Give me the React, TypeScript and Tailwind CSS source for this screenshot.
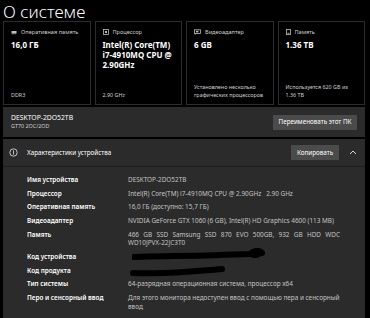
import React from "react";

const font = { fontFamily: '"Noto Sans", "Open Sans", sans-serif' };

function RamIcon() {
  return (
    <svg width="6" height="5" viewBox="0 0 6 5" className="shrink-0">
      <rect x="0.5" y="1" width="5" height="2.6" fill="#bdbdbd" />
      <rect x="1" y="3.6" width="0.6" height="0.8" fill="#bdbdbd" />
      <rect x="2.5" y="3.6" width="0.6" height="0.8" fill="#bdbdbd" />
      <rect x="4" y="3.6" width="0.6" height="0.8" fill="#bdbdbd" />
    </svg>
  );
}

function CpuIcon() {
  return (
    <svg width="6" height="6" viewBox="0 0 6 6" className="shrink-0">
      <rect x="0.5" y="0.5" width="5" height="5" fill="none" stroke="#bdbdbd" strokeWidth="0.8" />
      <rect x="2" y="2" width="2" height="2" fill="#bdbdbd" />
    </svg>
  );
}

function GpuIcon() {
  return (
    <svg width="7" height="6" viewBox="0 0 7 6" className="shrink-0">
      <rect x="0.5" y="0.8" width="6" height="3.6" fill="none" stroke="#bdbdbd" strokeWidth="0.8" />
      <rect x="2" y="1.8" width="2.4" height="1.6" fill="#bdbdbd" />
      <rect x="0.5" y="4.6" width="1.4" height="0.8" fill="#bdbdbd" />
    </svg>
  );
}

function DiskIcon() {
  return (
    <svg width="5" height="6" viewBox="0 0 5 6" className="shrink-0">
      <rect x="0.5" y="0.4" width="4" height="5.2" fill="none" stroke="#bdbdbd" strokeWidth="0.8" />
      <rect x="1.4" y="3.8" width="2.2" height="0.8" fill="#bdbdbd" />
    </svg>
  );
}

type CardProps = {
  icon: React.ReactNode;
  label: string;
  value: React.ReactNode;
  footer: React.ReactNode;
};

function SpecCard({ icon, label, value, footer }: CardProps) {
  return (
    <div className="h-[84px] border border-[#2c2c2c] bg-black px-[7px] pt-[6px] pb-[5px] flex flex-col justify-between">
      <div>
        <div className="flex items-center gap-[4px] text-[5.6px] leading-[8px] text-[#cfcfcf]">
          {icon}
          <span>{label}</span>
        </div>
        <div className="mt-[4px] text-[8px] leading-[10px] font-bold text-white">{value}</div>
      </div>
      <div className="text-[5.4px] leading-[7.5px] text-[#cfcfcf]">{footer}</div>
    </div>
  );
}

type Row = { label: string; value?: React.ReactNode; redact?: "a" | "b" };

const rows: Row[] = [
  { label: "Имя устройства", value: "DESKTOP-2DO52TB" },
  { label: "Процессор", value: "Intel(R) Core(TM) i7-4910MQ CPU @ 2.90GHz\u00a0\u00a0 2.90 GHz" },
  { label: "Оперативная память", value: "16,0 ГБ (доступно: 15,7 ГБ)" },
  { label: "Видеоадаптер", value: "NVIDIA GeForce GTX 1060 (6 GB), Intel(R) HD Graphics 4600 (113 MB)" },
  {
    label: "Память",
    value: (
      <span className="block text-justify [text-align-last:left]">
        466 GB SSD Samsung SSD 870 EVO 500GB, 932 GB HDD WDC WD10JPVX-22JC3T0
      </span>
    ),
  },
  { label: "Код устройства", redact: "a" },
  { label: "Код продукта", redact: "b" },
  { label: "Тип системы", value: "64-разрядная операционная система, процессор x64" },
  { label: "Перо и сенсорный ввод", value: "Для этого монитора недоступен ввод с помощью пера и сенсорный ввод" },
];

function Redaction({ kind }: { kind: "a" | "b" }) {
  if (kind === "a") {
    return (
      <svg width="140" height="16" viewBox="0 0 140 16" className="absolute left-[4px] top-[-5px]">
        <path d="M2 9 C 30 8, 70 8, 118 6 C 122 2, 128 2, 130 5" stroke="#000" strokeWidth="6" fill="none" strokeLinecap="round" />
        <ellipse cx="123" cy="6" rx="7" ry="4" fill="#000" />
      </svg>
    );
  }
  return (
    <svg width="110" height="16" viewBox="0 0 110 16" className="absolute left-[2px] top-[-3px]">
      <path d="M3 9 C 30 10, 60 8, 92 5" stroke="#000" strokeWidth="6" fill="none" strokeLinecap="round" />
    </svg>
  );
}

function InfoIcon() {
  return (
    <svg width="9" height="9" viewBox="0 0 9 9" className="shrink-0">
      <circle cx="4.5" cy="4.5" r="3.7" fill="none" stroke="#e6e6e6" strokeWidth="0.8" />
      <rect x="4.1" y="2.4" width="0.8" height="4.2" fill="#e6e6e6" />
    </svg>
  );
}

function ChevronUp() {
  return (
    <svg width="8" height="5" viewBox="0 0 8 5">
      <path d="M1 4 L4 1 L7 4" stroke="#e6e6e6" strokeWidth="0.9" fill="none" />
    </svg>
  );
}

export default function App() {
  return (
    <div className="w-[370px] h-[318px] overflow-hidden bg-black pl-[3px] pr-[5px] text-white" style={font}>
      <div className="pt-[2px] text-[17px] leading-[19px] font-light">О системе</div>

      <div className="grid grid-cols-4 gap-[4px]">
        <SpecCard icon={<RamIcon />} label="Оперативная память" value="16,0 ГБ" footer="DDR3" />
        <SpecCard
          icon={<CpuIcon />}
          label="Процессор"
          value={
            <>
              Intel(R) Core(TM)
              <br />
              i7-4910MQ CPU @
              <br />
              2.90GHz
            </>
          }
          footer="2.90 GHz"
        />
        <SpecCard
          icon={<GpuIcon />}
          label="Видеоадаптер"
          value="6 GB"
          footer="Установлено несколько графических процессоров"
        />
        <SpecCard icon={<DiskIcon />} label="Память" value="1.36 TB" footer="Используется 620 GB из 1.36 TB" />
      </div>

      <div className="mt-[2px] h-[30px] bg-[#2b2b2b] pl-[8px] pr-[8px] flex items-center justify-between">
        <div>
          <div className="text-[6.8px] leading-[8px] text-white">DESKTOP-2DO52TB</div>
          <div className="text-[5.4px] leading-[8px] text-[#cfcfcf]">GT70 2OC/2OD</div>
        </div>
        <div className="w-[84px] h-[15px] bg-[#4b4b4b] flex items-center justify-center text-[6.3px] text-white">
          Переименовать этот ПК
        </div>
      </div>

      <div className="mt-[2px] bg-[#2b2b2b] h-[200px]">
        <div className="h-[28px] flex items-center pl-[6px] pr-[8px] border-b border-[#1c1c1c]">
          <InfoIcon />
          <span className="ml-[9px] text-[6.3px] text-white">Характеристики устройства</span>
          <div className="ml-auto w-[48px] h-[15px] bg-[#4b4b4b] flex items-center justify-center text-[6.3px] text-white">
            Копировать
          </div>
          <div className="ml-[10px] w-[8px] flex items-center justify-center">
            <ChevronUp />
          </div>
        </div>

        <div className="pt-[9px] pl-[24px] flex flex-col gap-[5.2px]">
          {rows.map((r) => (
            <div key={r.label} className="flex text-[6.4px] leading-[8.5px]">
              <div className="w-[101px] shrink-0 font-semibold text-white">{r.label}</div>
              <div className="relative w-[212px] text-[#c4c4c4]">
                {r.redact ? (
                  <>
                    &nbsp;
                    <Redaction kind={r.redact} />
                  </>
                ) : (
                  r.value
                )}
              </div>
            </div>
          ))}
        </div>
      </div>
    </div>
  );
}
